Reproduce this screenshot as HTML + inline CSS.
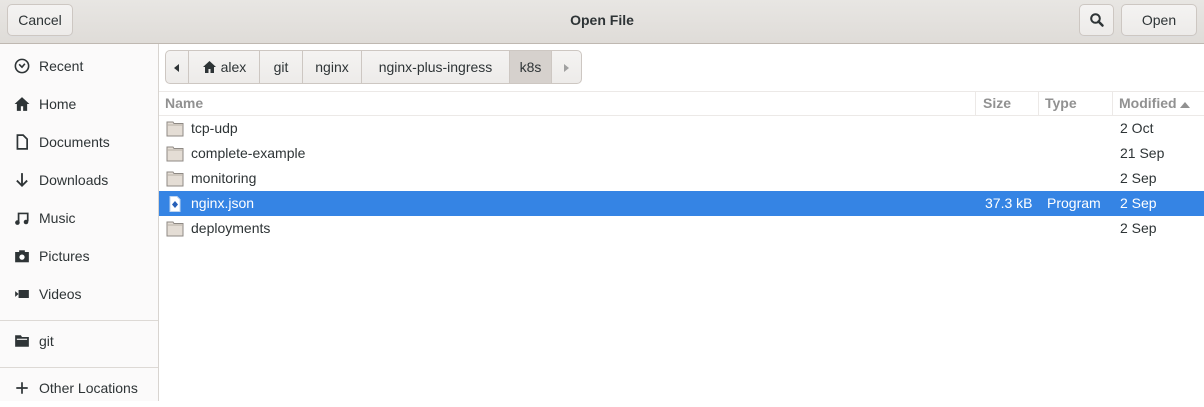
<!DOCTYPE html>
<html><head><style>
*{box-sizing:border-box;margin:0;padding:0}
body{width:1204px;height:401px;overflow:hidden;font-family:"Liberation Sans","DejaVu Sans",sans-serif;font-size:14px;color:#2e3436;background:#fff;position:relative}
.hb{position:absolute;left:0;top:0;width:1204px;height:44px;background:linear-gradient(#e8e6e3,#dfdcd8);border-bottom:1px solid #bfb8b1}
.btn{position:absolute;top:4px;height:32px;border:1px solid #cdc7c2;border-radius:5px;background:linear-gradient(#f4f3f2,#edebe9);box-shadow:0 1px #ddd;text-align:center;line-height:30px;font-size:14px;color:#2e3436}
.title{position:absolute;top:0;width:1204px;text-align:center;line-height:40px;font-weight:bold;font-size:14px}
.sb{position:absolute;left:0;top:44px;width:159px;height:357px;background:#fbfafa;border-right:1px solid #d8d4d0}
.si{position:absolute;left:0;width:158px;height:38px;line-height:38px;padding-left:39px}
.si svg{position:absolute;left:14px;top:11px;width:16px;height:16px}
.sep{position:absolute;left:0;width:158px;border-top:1px solid #ddd9d5}
.pb{position:absolute;top:50px;height:34px;border:1px solid #cdc7c2;background:linear-gradient(#f4f3f2,#edebe9);line-height:32px;font-size:14px;text-align:center}
.hdr{position:absolute;top:91px;left:159px;width:1045px;height:25px;border-bottom:1px solid #ece9e7;border-top:1px solid #ece9e7;color:#919191;font-weight:bold;line-height:22px}
.hdr span{position:absolute;top:0}
.cs{position:absolute;top:0;height:24px;border-left:1px solid #ece9e7}
.row{position:absolute;left:159px;width:1045px;height:25px;line-height:25px}
.row .n{position:absolute;left:32px}
.row .d{position:absolute;left:961px}
.row svg{position:absolute;left:7px;top:5px}
.sel{background:#3584e4;color:#fff}
</style></head><body>
<div class="hb">
<div class="btn" style="left:7px;width:66px">Cancel</div>
<div class="title">Open File</div>
<div class="btn" style="left:1079px;width:35px"><svg width="16" height="16" viewBox="0 0 16 16" style="margin-top:7px"><circle cx="6.5" cy="6.5" r="4.3" fill="none" stroke="#2e3436" stroke-width="2"/><path d="M9.5 9.5L13.5 13.5" stroke="#2e3436" stroke-width="2.5" stroke-linecap="round"/></svg></div>
<div class="btn" style="left:1121px;width:76px">Open</div>
</div>
<div class="sb">
<div class="si" style="top:3px"><svg viewBox="0 0 14 14"><circle cx="7" cy="7" r="5.8" fill="none" stroke="#2e3436" stroke-width="1.4"/><path d="M4.5 5.5L7 8L9.5 5" fill="none" stroke="#2e3436" stroke-width="1.4"/></svg>Recent</div>
<div class="si" style="top:41px"><svg viewBox="0 0 14 14"><path d="M7 1L0.5 7H2.5V13H6V9H8V13H11.5V7H13.5Z" fill="#2e3436"/></svg>Home</div>
<div class="si" style="top:79px"><svg viewBox="0 0 14 14"><path d="M3 1H8L11.5 4.5V13H3Z" fill="none" stroke="#2e3436" stroke-width="1.5"/></svg>Documents</div>
<div class="si" style="top:117px"><svg viewBox="0 0 14 14"><path d="M7 1V12M2.5 7.5L7 12L11.5 7.5" fill="none" stroke="#2e3436" stroke-width="1.6"/></svg>Downloads</div>
<div class="si" style="top:155px"><svg viewBox="0 0 14 14"><path d="M4 11V3H12V10" fill="none" stroke="#2e3436" stroke-width="1.5"/><circle cx="3" cy="11" r="2" fill="#2e3436"/><circle cx="10.5" cy="10.5" r="2" fill="#2e3436"/></svg>Music</div>
<div class="si" style="top:193px"><svg viewBox="0 0 14 14"><rect x="1" y="3.5" width="12" height="9" fill="#2e3436"/><rect x="4.5" y="2" width="5" height="2" fill="#2e3436"/><circle cx="7" cy="8" r="2.3" fill="#fff"/></svg>Pictures</div>
<div class="si" style="top:231px"><svg viewBox="0 0 14 14"><rect x="4" y="3.5" width="9" height="7" fill="#2e3436"/><path d="M1 4.5L4 7L1 9.5Z" fill="#2e3436"/></svg>Videos</div>
<div class="sep" style="top:276px"></div>
<div class="si" style="top:278px"><svg viewBox="0 0 14 14"><path d="M1 2H6L7 3.5H13V12H1Z" fill="#2e3436"/><rect x="2.5" y="5" width="9" height="1" fill="#fbfafa"/></svg>git</div>
<div class="sep" style="top:323px"></div>
<div class="si" style="top:325px"><svg viewBox="0 0 14 14"><path d="M7 2V12M2 7H12" stroke="#2e3436" stroke-width="1.5"/></svg>Other Locations</div>
</div>
<div class="pb" style="left:165px;width:24px;border-radius:5px 0 0 5px"><svg width="6" height="8" viewBox="0 0 6 8"><path d="M5 0V8L0 4Z" fill="#2e3436"/></svg></div>
<div class="pb" style="left:188px;width:72px"><svg width="15" height="14" viewBox="0 0 14 14" style="vertical-align:-2px"><path d="M7 1L0.5 7H2.5V13H6V9H8V13H11.5V7H13.5Z" fill="#2e3436"/></svg> alex</div>
<div class="pb" style="left:259px;width:44px">git</div>
<div class="pb" style="left:302px;width:60px">nginx</div>
<div class="pb" style="left:361px;width:149px">nginx-plus-ingress</div>
<div class="pb" style="left:509px;width:43px;background:#d6d1cd">k8s</div>
<div class="pb" style="left:551px;width:31px;border-radius:0 5px 5px 0"><svg width="6" height="8" viewBox="0 0 6 8"><path d="M0 0V8L5 4Z" fill="#a0a0a0"/></svg></div>
<div class="hdr">
<span style="left:6px">Name</span>
<div class="cs" style="left:816px"></div><span style="left:824px">Size</span>
<div class="cs" style="left:879px"></div><span style="left:886px">Type</span>
<div class="cs" style="left:953px"></div><span style="left:960px">Modified <svg width="10" height="6" viewBox="0 0 10 6"><path d="M0 6L5 0L10 6Z" fill="#919191"/></svg></span>
</div>
<div class="row" style="top:116px"><svg width="18" height="16" viewBox="0 0 18 16"><path d="M1 1H7L8 2.5H17V15H1Z" fill="#e4ddd5" stroke="#8f8a85"/><path d="M1 4H17" stroke="#b9b1a8"/></svg><span class="n">tcp-udp</span><span class="d">2 Oct</span></div>
<div class="row" style="top:141px"><svg width="18" height="16" viewBox="0 0 18 16"><path d="M1 1H7L8 2.5H17V15H1Z" fill="#e4ddd5" stroke="#8f8a85"/><path d="M1 4H17" stroke="#b9b1a8"/></svg><span class="n">complete-example</span><span class="d">21 Sep</span></div>
<div class="row" style="top:166px"><svg width="18" height="16" viewBox="0 0 18 16"><path d="M1 1H7L8 2.5H17V15H1Z" fill="#e4ddd5" stroke="#8f8a85"/><path d="M1 4H17" stroke="#b9b1a8"/></svg><span class="n">monitoring</span><span class="d">2 Sep</span></div>
<div class="row sel" style="top:191px"><svg width="18" height="16" viewBox="0 0 18 16"><path d="M4 0.5H11L14 3.5V15.5H4Z" fill="#fff" stroke="#c0d4ee"/><path d="M9 5L12 8.5L9 12L6 8.5Z" fill="#2760b8"/></svg><span class="n">nginx.json</span><span style="position:absolute;left:826px">37.3 kB</span><span style="position:absolute;left:888px">Program</span><span class="d">2 Sep</span></div>
<div class="row" style="top:216px"><svg width="18" height="16" viewBox="0 0 18 16"><path d="M1 1H7L8 2.5H17V15H1Z" fill="#e4ddd5" stroke="#8f8a85"/><path d="M1 4H17" stroke="#b9b1a8"/></svg><span class="n">deployments</span><span class="d">2 Sep</span></div>
</body></html>
